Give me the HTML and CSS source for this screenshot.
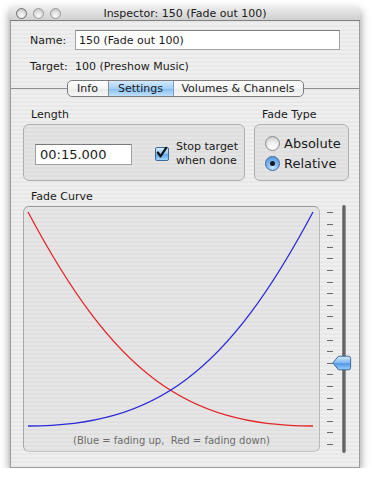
FILE: index.html
```html
<!DOCTYPE html>
<html lang="en">
  <head>
    <meta charset="UTF-8" />
    <title>Inspector: 150 (Fade out 100)</title>
    <link rel="stylesheet" href="styles.css">
  </head>
  <body>
    <div class="window">
      <!-- title bar -->
      <div class="titlebar">
        <div class="lights">
          <span class="light"></span>
          <span class="light"></span>
          <span class="light"></span>
        </div>
        <div class="title">Inspector: 150 (Fade out 100)</div>
        <div></div>
      </div>

      <div class="header">
        <div class="row">
          <span class="label">Name:</span>
          <input class="field" type="text" value="150 (Fade out 100)">
        </div>
        <div class="row target">
          <span class="label">Target:</span>
          <span>100 (Preshow Music)</span>
        </div>
      </div>

      <div class="tabbar">
        <div class="rule"></div>
        <div class="tabs">
          <span class="tab info">Info</span>
          <span class="tab settings active">Settings</span>
          <span class="tab volumes">Volumes &amp; Channels</span>
        </div>
        <div class="rule"></div>
      </div>

      <div class="content">
        <div class="groups">
          <div class="group">
            <div class="group-title">Length</div>
            <div class="box length-box">
              <input class="time" type="text" value="00:15.000">
              <div class="check">
                <span class="checkbox">
                  <svg width="14" height="14" viewBox="0 0 14 14">
                    <path d="M3 6.5 L6 10.5 L12 1.5" fill="none" stroke="#111" stroke-width="2.4" stroke-linecap="round" stroke-linejoin="round"/>
                  </svg>
                </span>
                <span class="check-text">Stop target<br>when done</span>
              </div>
            </div>
          </div>
          <div class="group">
            <div class="group-title">Fade Type</div>
            <div class="box type-box">
              <div class="radio-row"><span class="radio"></span>Absolute</div>
              <div class="radio-row"><span class="radio on"></span>Relative</div>
            </div>
          </div>
        </div>

        <div class="curve-area">
          <div class="group curve-group">
            <div class="group-title">Fade Curve</div>
            <div class="box plot">
              <svg class="curves" width="295" height="226" viewBox="0 0 295 226">
                <path d="M4 5 C 89.5 165.5, 160.75 219, 289 219" fill="none" stroke="#e3262b" stroke-width="1.3"/>
                <path d="M4 219 C 132.25 219, 203.5 165.5, 289 5" fill="none" stroke="#2b2bd9" stroke-width="1.3"/>
              </svg>
              <div class="caption">(Blue = fading up,&nbsp; Red = fading down)</div>
            </div>
          </div>

          <div class="slider">
            <div class="ticks">
              <span></span><span></span><span></span><span></span><span></span><span></span><span></span>
              <span></span><span></span><span></span><span></span><span></span><span></span><span></span>
              <span></span><span></span><span></span><span></span><span></span><span></span><span></span>
            </div>
            <div class="track"></div>
            <svg class="knob" width="20" height="16" viewBox="0 0 20 16">
              <defs>
                <linearGradient id="kg" x1="0" y1="0" x2="0" y2="1">
                  <stop offset="0" stop-color="#d6ecff"/>
                  <stop offset="0.5" stop-color="#7db7ef"/>
                  <stop offset="0.55" stop-color="#4f98e4"/>
                  <stop offset="1" stop-color="#9fd0fb"/>
                </linearGradient>
              </defs>
              <path d="M0.8 8 L6.5 1.2 H16.5 Q18.6 1.2 18.6 3.4 V12.6 Q18.6 14.8 16.5 14.8 H6.5 Z" fill="url(#kg)" stroke="#3d6a9e" stroke-width="1"/>
            </svg>
          </div>
        </div>
      </div>
    </div>
  </body>
</html>
```

FILE: styles.css
```css
body {
  margin: 0;
  background: #ffffff;
  font-family: "DejaVu Sans", sans-serif;
  font-size: 11px;
  color: #1a1a1a;
}

/* window frame */
.window {
  margin: 7px 0 0 10px;
  width: 350px;
  height: 461px;
  box-sizing: border-box;
  border: 1px solid #9c9c9c;
  border-top: none;
  background: repeating-linear-gradient(to bottom, #efefef 0 2px, #e8e8e8 2px 4px);
  box-shadow: 0 4px 9px rgba(0, 0, 0, 0.45);
  display: flex;
  flex-direction: column;
}

.titlebar {
  height: 15px;
  border-bottom: 1px solid #7f7f7f;
  background: linear-gradient(#ececec, #d0d0d0);
  display: grid;
  grid-template-columns: 1fr auto 1fr;
  align-items: center;
  margin: 0 -1px;
}
.lights {
  display: flex;
  gap: 6px;
  padding-left: 6px;
}
.light {
  width: 11px;
  height: 11px;
  box-sizing: border-box;
  border-radius: 50%;
  border: 1px solid #9a9a9a;
  background: radial-gradient(circle at 50% 75%, #fafafa 0, #e2e2e2 45%, #b9b9b9 100%);
}
.light:first-child {
  border-color: #6e6e6e;
}
.title {
  font-size: 11px;
  color: #202020;
}

/* name / target */
.header {
  padding: 9px 19px 0 19px;
}
.row {
  display: flex;
  align-items: center;
}
.label {
  width: 45px;
  flex: none;
}
.field {
  flex: 1;
  height: 20px;
  box-sizing: border-box;
  border: 1px solid #a4a4a4;
  border-top-color: #7d7d7d;
  padding: 0 3px;
  font: inherit;
  color: #1a1a1a;
  background: #fff;
}
.target {
  margin-top: 9px;
  height: 14px;
}

/* tab control */
.tabbar {
  margin-top: 7px;
  display: flex;
  align-items: center;
}
.rule {
  flex: 1;
  height: 1px;
  background: #8e8e8e;
}
.tabs {
  display: flex;
  height: 17px;
  box-sizing: border-box;
  border: 1px solid #7c7c7c;
  border-radius: 5px;
  overflow: hidden;
  background: linear-gradient(#ffffff, #f4f4f4 50%, #e9e9e9 51%, #f7f7f7);
}
.tab {
  display: flex;
  align-items: center;
  justify-content: center;
  border-left: 1px solid #8e8e8e;
}
.tab.info {
  width: 40px;
  border-left: none;
}
.tab.settings {
  width: 64px;
}
.tab.volumes {
  width: 129px;
}
.tab.active {
  background: linear-gradient(#d3eafd, #a5d1f7 50%, #82bdf1 51%, #bfe1fc);
  border-right: 1px solid #7c9cbf;
}
.tab.active + .tab {
  border-left: none;
}

/* content */
.content {
  padding: 11px 10px 15px 12px;
  flex: 1;
  display: flex;
  flex-direction: column;
}
.groups {
  display: grid;
  grid-template-columns: 222px 95px;
  gap: 9px;
}
.group-title {
  height: 14px;
  line-height: 14px;
  padding-left: 8px;
  margin-bottom: 2px;
}
.box {
  box-sizing: border-box;
  border: 1px solid #aeaeae;
  border-radius: 6px;
  background: repeating-linear-gradient(to bottom, #e4e4e4 0 2px, #dedede 2px 4px);
}
.length-box {
  height: 57px;
  display: flex;
  align-items: center;
  padding: 3px 0 0 11px;
}
.time {
  width: 97px;
  height: 21px;
  box-sizing: border-box;
  border: 1px solid #a0a0a0;
  border-top-color: #7a7a7a;
  padding: 1px 4px 0;
  font: inherit;
  font-size: 13px;
  color: #1a1a1a;
  background: #fff;
}
.check {
  display: flex;
  align-items: center;
  margin-left: 23px;
  gap: 7px;
}
.checkbox {
  width: 14px;
  height: 14px;
  box-sizing: border-box;
  border: 1px solid #3f6b9c;
  border-radius: 2px;
  background: linear-gradient(#d9eefe, #8ec4f2 50%, #5ea4e8 55%, #a6d5fb);
  display: flex;
}
.checkbox svg {
  margin: -2px 0 0 -1px;
}
.check-text {
  line-height: 14px;
}

.type-box {
  height: 57px;
  padding: 11px 0 0 10px;
  font-size: 13px;
  display: flex;
  flex-direction: column;
  gap: 5px;
}
.radio-row {
  display: flex;
  align-items: center;
  gap: 4px;
  height: 15px;
}
.radio {
  width: 15px;
  height: 15px;
  box-sizing: border-box;
  border-radius: 50%;
  border: 1px solid #8c8c8c;
  background: radial-gradient(circle at 50% 80%, #ffffff 0, #f0f0f0 40%, #c6c6c6 100%);
  display: flex;
  align-items: center;
  justify-content: center;
}
.radio.on {
  border-color: #3e6a9d;
  background: radial-gradient(circle at 50% 80%, #c9e6ff 0, #7fb8f0 45%, #4a8fd9 100%);
}
.radio.on::after {
  content: "";
  width: 5px;
  height: 5px;
  border-radius: 50%;
  background: #1a1a1a;
}

/* fade curve */
.curve-area {
  margin-top: 9px;
  display: flex;
}
.curve-group {
  width: 297px;
}
.plot {
  height: 246px;
  border-color: #9a9a9a #b8b8b8 #c4c4c4 #a8a8a8;
  background: repeating-linear-gradient(to bottom, #e6e6e6 0 2px, #e0e0e0 2px 4px);
  display: flex;
  flex-direction: column;
}
.curves {
  display: block;
}
.caption {
  text-align: center;
  line-height: 16px;
  font-size: 10px;
  color: #6c6c6c;
}

.slider {
  position: relative;
  align-self: flex-end;
  height: 248px;
  margin: 0 0 -1px 7px;
  display: flex;
  gap: 9px;
}
.ticks {
  display: flex;
  flex-direction: column;
  justify-content: space-between;
  padding: 7px 0 8px;
}
.ticks span {
  width: 6px;
  height: 1px;
  background: #6a6a6a;
}
.track {
  width: 4px;
  border-radius: 2px;
  background: linear-gradient(to right, #9a9a9a, #5e5e5e 40%, #6c6c6c 70%, #a8a8a8);
}
/* knob sits over the track */
.knob {
  position: absolute;
  left: 5px;
  top: 150px;
}
```
